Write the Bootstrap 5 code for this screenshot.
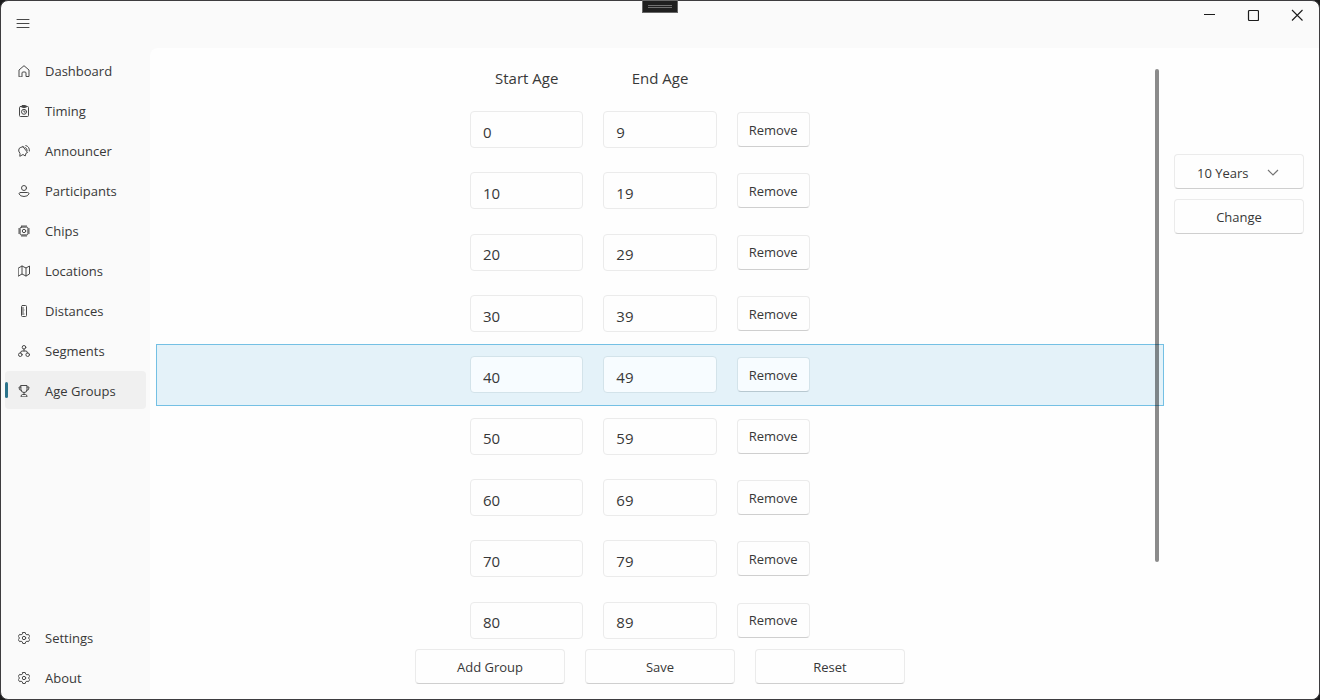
<!DOCTYPE html>
<html lang="en">
<head>
<meta charset="utf-8">
<meta name="viewport" content="width=device-width, initial-scale=1">
<title>Age Groups</title>
<link href="https://cdn.jsdelivr.net/npm/bootstrap@5.3.0/dist/css/bootstrap.min.css" rel="stylesheet">
<style>
  body { background: #1b1b1c; color: #383838; font: 13px/20px "Open Sans", "Noto Sans", sans-serif; }
  .app-window { border: 1px solid #3d3c3f; border-radius: 8px; background: #fafafa; }
  .grab-handle { width: 36px; height: 13px; left: 50%; top: -1px; margin-left: -18px; background: #1f1f1f; border: 1px solid #666; z-index: 5; }
  .grab-handle span { width: 24px; height: 3px; border: solid #707070; border-width: 1px 0; }
  .title-bar { height: 47px; flex: none; }
  .plain-btn { border: 0; padding: 0; background: none; color: #1c1c1c; display: grid; place-items: center; }
  .menu-btn { width: 44px; height: 46px; }
  .caption-btn { width: 44px; height: 28px; }
  .side-nav { width: 149px; flex: none; padding: 3px 4px 3px; }
  .side-nav .nav { gap: 2px; }
  .side-nav .nav-link { position: relative; height: 38px; padding: 1px 0 0 13px; gap: 15px; color: #383838; border-radius: 4px; white-space: nowrap; }
  .side-nav .nav-link svg { width: 12px; height: 12px; flex: none; }
  .side-nav .nav-link:hover, .side-nav .nav-link.active { background: #f0f0f0; }
  .side-nav .nav-link.active::before { content: ""; position: absolute; left: 0; top: 11px; width: 3px; height: 16px; border-radius: 2px; background: #2b738b; }
  svg.line-art { fill: none; stroke: #484848; stroke-width: 1; stroke-linecap: round; stroke-linejoin: round; }
  .page-panel { background: #fefefe; border-top-left-radius: 8px; border-bottom-right-radius: 8px; padding: 0 15px 15px 6px; gap: 10px; }
  .age-columns { display: grid; grid-template-columns: repeat(3, 1fr); column-gap: 20px; width: 380px; align-items: center; }
  .head-row { height: 51px; padding-top: 8px; font-size: 15px; flex: none; }
  .age-row { flex: 1 0 61px; border: 1px solid transparent; }
  .age-row:last-child { flex-basis: 50px; align-items: flex-end !important; }
  .age-row.selected { background: #e4f2f9; border-color: #74c0e4; }
  .age-input { height: 37px; padding: 6px 12px 2px; font-size: 15px; color: #383838; background: #fefefe; border: 1px solid #ebebeb; border-radius: 4px; }
  .soft-btn { height: 35px; padding: 0; font-size: 13px; line-height: 20px; color: #383838; background-color: #fefefe; border: 1px solid #ebebeb; border-bottom-color: #cfcfcf; border-radius: 4px; }
  .soft-btn:hover { background-color: #f7f7f7; border-color: #e0e0e0; }
  .remove-btn { width: 73px; }
  .selected .age-input, .selected .soft-btn { background: #f7fcff; border-color: #d3e3ea; }
  .selected .soft-btn { border-bottom-color: #b7c8d0; }
  .action-bar { gap: 20px; padding-top: 9px; }
  .wide-btn { width: 150px; }
  .side-tools { width: 130px; padding-top: 106px; gap: 10px; flex: none; }
  .span-select { padding: 2px 40px 0 22px; background-position: right 23px center; background-size: 14px 14px;
    --bs-form-select-bg-img: url("data:image/svg+xml,%3csvg xmlns='http://www.w3.org/2000/svg' viewBox='0 0 14 14'%3e%3cpath fill='none' stroke='%23757575' stroke-width='1.200' d='M2 5l5 5 5-5'/%3e%3c/svg%3e"); }
  .scroll-thumb { width: 4px; right: 5px; top: 21px; bottom: 78px; border-radius: 2px; background: rgba(0, 0, 0, .45); }
</style>
</head>
<body>
<div class="app-window position-relative vh-100 d-flex flex-column">
  <div class="grab-handle position-absolute d-flex justify-content-center align-items-center"><span></span></div>
  <header class="title-bar d-flex justify-content-between align-items-start">
    <button class="plain-btn menu-btn" type="button" aria-label="Menu"><svg class="line-art" width="14" height="12"><path d="M1 1.500h12M1 5.500h12M1 9.500h12"/></svg></button>
    <div class="d-flex">
      <button class="plain-btn caption-btn" type="button" aria-label="Minimize"><svg width="12" height="12" fill="none" stroke="currentColor"><path d="M1 5.500h11"/></svg></button>
      <button class="plain-btn caption-btn" type="button" aria-label="Maximize"><svg width="12" height="12" fill="none" stroke="currentColor" stroke-width="1.200"><rect x="1.500" y="1.500" width="10" height="10" rx="1"/></svg></button>
      <button class="plain-btn caption-btn" type="button" aria-label="Close"><svg width="12" height="12" fill="none" stroke="currentColor" stroke-width="1.100"><path d="M1 1l10.500 10.500M11.500 1l-10.500 10.500"/></svg></button>
    </div>
  </header>

  <div class="d-flex flex-grow-1">
    <nav class="side-nav d-flex flex-column justify-content-between" aria-label="Main">
      <div class="nav flex-column">
        <a class="nav-link d-flex align-items-center" href="#"><svg class="line-art" viewBox="1 1 12 12"><path d="M2 12.500V6L7 1.700 12 6v6.500H9V9q0-1-1-1H6Q5 8 5 9v3.500z"/></svg>Dashboard</a>
        <a class="nav-link d-flex align-items-center" href="#"><svg class="line-art" viewBox="1 1 12 12"><rect x="2.500" y="2.500" width="9" height="10" rx="1"/><rect x="4.500" y="1.500" width="5" height="2" rx="1"/><circle cx="7" cy="7.800" r="2.500"/><path d="M7 6.800v1.200h.8"/></svg>Timing</a>
        <a class="nav-link d-flex align-items-center" href="#"><svg class="line-art" viewBox="1 1 12 12"><path d="M6 2.700 10.600 8.500 9 9.200 8.200 12 6 10.500 2.800 12.300 3 9.500Q.9 7 2 4.600 3.500 3 6 2.700zM8 3.300Q10.200 4 10.200 6.500M8.800 1.500Q12.700 2.500 12.400 7"/></svg>Announcer</a>
        <a class="nav-link d-flex align-items-center" href="#"><svg class="line-art" viewBox="1 1 12 12"><circle cx="7" cy="4" r="2.500"/><path d="M3.500 8.500h7q1.500 0 1.500 1.300Q11 12.500 7 12.500T2 9.800Q2 8.500 3.500 8.500z"/></svg>Participants</a>
        <a class="nav-link d-flex align-items-center" href="#"><svg class="line-art" viewBox="1 1 12 12"><rect x="3" y="3" width="8" height="8" rx="1.500"/><circle cx="7" cy="7" r="1.700"/><path d="M5 1.500V3M7 1.500V3M9 1.500V3M5 11v1.500M7 11v1.500M9 11v1.500M1.500 5H3M1.500 7H3M1.500 9H3M11 5h1.500M11 7h1.500M11 9h1.500"/></svg>Chips</a>
        <a class="nav-link d-flex align-items-center" href="#"><svg class="line-art" viewBox="1 1 12 12"><path d="M1.500 4 5 2l4 2 3.500-2v8L9 12l-4-2-3.500 2zM5 2v8M9 4v8"/></svg>Locations</a>
        <a class="nav-link d-flex align-items-center" href="#"><svg class="line-art" viewBox="1 1 12 12"><rect x="4.500" y="1.500" width="5" height="11" rx="1"/><path d="M4.500 4h2M4.500 6h2.500M4.500 8h2M4.500 10h2.500"/></svg>Distances</a>
        <a class="nav-link d-flex align-items-center" href="#"><svg class="line-art" viewBox="1 1 12 12"><circle cx="7" cy="3.300" r="1.800"/><circle cx="3.300" cy="10.700" r="1.800"/><circle cx="10.700" cy="10.700" r="1.800"/><path d="M7 5V7M3.500 9Q3.500 7 5 7h4q1.500 0 1.500 2"/></svg>Segments</a>
        <a class="nav-link active d-flex align-items-center" href="#" aria-current="page"><svg class="line-art" viewBox="1 1 12 12"><path d="M4 1.500h6V6Q10 8.500 7 8.500T4 6zM4 3H2Q1.600 6.500 4.300 6.500M10 3h2Q12.400 6.500 9.700 6.500M7 8.500v2M4 12.500q0-2 1.500-2h3q1.500 0 1.500 2z"/></svg>Age Groups</a>
      </div>
      <div class="nav flex-column">
        <a class="nav-link d-flex align-items-center" href="#"><svg class="line-art" viewBox="1 1 12 12"><path d="M5.800 1.500h2.400l.5 1.600 1.200.7 1.600-.4 1.200 2-1.200 1.600 1.200 1.600-1.200 2-1.600-.4-1.200.7-.5 1.600H5.800L5.300 10.900l-1.200-.7-1.600.4-1.200-2L2.500 7 1.300 5.400l1.200-2 1.600.4L5.300 3.100z"/><circle cx="7" cy="7" r="1.700"/></svg>Settings</a>
        <a class="nav-link d-flex align-items-center" href="#"><svg class="line-art" viewBox="1 1 12 12"><path d="M5.800 1.500h2.400l.5 1.600 1.200.7 1.600-.4 1.200 2-1.200 1.600 1.200 1.600-1.200 2-1.600-.4-1.200.7-.5 1.600H5.800L5.300 10.900l-1.200-.7-1.600.4-1.200-2L2.500 7 1.300 5.400l1.200-2 1.600.4L5.300 3.100z"/><circle cx="7" cy="7" r="1.700"/></svg>About</a>
      </div>
    </nav>

    <main class="page-panel d-flex flex-grow-1">
      <section class="d-flex flex-column flex-grow-1">
        <div class="position-relative d-flex flex-column flex-grow-1">
          <div class="head-row age-columns mx-auto text-center"><span>Start Age</span><span>End Age</span></div>
          <div class="d-flex flex-column flex-grow-1">
            <div class="age-row d-flex justify-content-center align-items-center"><div class="age-columns"><input class="form-control age-input" aria-label="Start age" value="0"><input class="form-control age-input" aria-label="End age" value="9"><button class="btn soft-btn remove-btn" type="button">Remove</button></div></div>
            <div class="age-row d-flex justify-content-center align-items-center"><div class="age-columns"><input class="form-control age-input" aria-label="Start age" value="10"><input class="form-control age-input" aria-label="End age" value="19"><button class="btn soft-btn remove-btn" type="button">Remove</button></div></div>
            <div class="age-row d-flex justify-content-center align-items-center"><div class="age-columns"><input class="form-control age-input" aria-label="Start age" value="20"><input class="form-control age-input" aria-label="End age" value="29"><button class="btn soft-btn remove-btn" type="button">Remove</button></div></div>
            <div class="age-row d-flex justify-content-center align-items-center"><div class="age-columns"><input class="form-control age-input" aria-label="Start age" value="30"><input class="form-control age-input" aria-label="End age" value="39"><button class="btn soft-btn remove-btn" type="button">Remove</button></div></div>
            <div class="age-row selected d-flex justify-content-center align-items-center"><div class="age-columns"><input class="form-control age-input" aria-label="Start age" value="40"><input class="form-control age-input" aria-label="End age" value="49"><button class="btn soft-btn remove-btn" type="button">Remove</button></div></div>
            <div class="age-row d-flex justify-content-center align-items-center"><div class="age-columns"><input class="form-control age-input" aria-label="Start age" value="50"><input class="form-control age-input" aria-label="End age" value="59"><button class="btn soft-btn remove-btn" type="button">Remove</button></div></div>
            <div class="age-row d-flex justify-content-center align-items-center"><div class="age-columns"><input class="form-control age-input" aria-label="Start age" value="60"><input class="form-control age-input" aria-label="End age" value="69"><button class="btn soft-btn remove-btn" type="button">Remove</button></div></div>
            <div class="age-row d-flex justify-content-center align-items-center"><div class="age-columns"><input class="form-control age-input" aria-label="Start age" value="70"><input class="form-control age-input" aria-label="End age" value="79"><button class="btn soft-btn remove-btn" type="button">Remove</button></div></div>
            <div class="age-row d-flex justify-content-center align-items-center"><div class="age-columns"><input class="form-control age-input" aria-label="Start age" value="80"><input class="form-control age-input" aria-label="End age" value="89"><button class="btn soft-btn remove-btn" type="button">Remove</button></div></div>
          </div>
          <div class="scroll-thumb position-absolute"></div>
        </div>
        <div class="action-bar d-flex justify-content-center">
          <button class="btn soft-btn wide-btn" type="button">Add Group</button>
          <button class="btn soft-btn wide-btn" type="button">Save</button>
          <button class="btn soft-btn wide-btn" type="button">Reset</button>
        </div>
      </section>
      <aside class="side-tools d-flex flex-column">
        <select class="form-select soft-btn span-select" aria-label="Group span"><option>10 Years</option></select>
        <button class="btn soft-btn w-100" type="button">Change</button>
      </aside>
    </main>
  </div>
</div>
<script src="https://cdn.jsdelivr.net/npm/bootstrap@5.3.0/dist/js/bootstrap.bundle.min.js"></script>
</body>
</html>
